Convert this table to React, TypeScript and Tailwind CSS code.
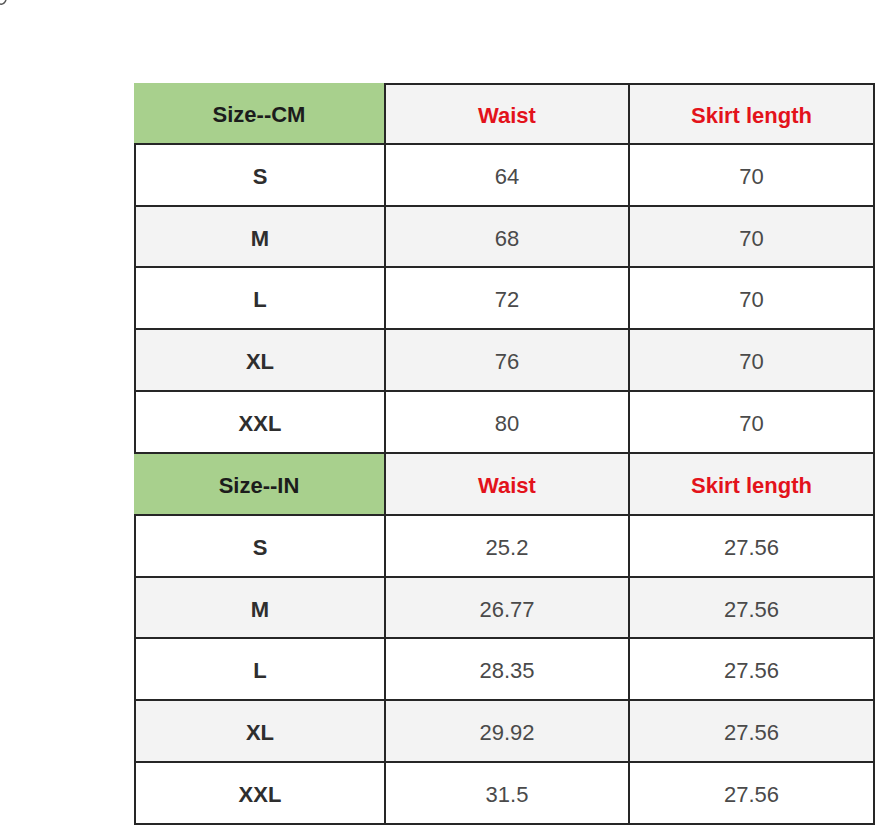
const cm = [
  ["S", "64", "70"],
  ["M", "68", "70"],
  ["L", "72", "70"],
  ["XL", "76", "70"],
  ["XXL", "80", "70"],
];
const inch = [
  ["S", "25.2", "27.56"],
  ["M", "26.77", "27.56"],
  ["L", "28.35", "27.56"],
  ["XL", "29.92", "27.56"],
  ["XXL", "31.5", "27.56"],
];

function Header({ label, first }: { label: string; first: boolean }) {
  return (
    <>
      <div className="flex items-center justify-center border-b-2 border-r-2 border-[#262626] bg-[#a8d08d] pt-[3px] text-[22px] font-bold text-[#1c1c1c]">
        {label}
      </div>
      <div className={`flex items-center justify-center border-b-2 border-r-2 border-[#262626] bg-[#f3f3f3] pt-[3px] text-[22px] font-bold text-[#e3121b] ${first ? "border-t-2" : ""}`}>
        Waist
      </div>
      <div className={`flex items-center justify-center border-b-2 border-r-2 border-[#262626] bg-[#f3f3f3] pt-[3px] text-[22px] font-bold text-[#e3121b] ${first ? "border-t-2" : ""}`}>
        Skirt length
      </div>
    </>
  );
}

function Rows({ rows }: { rows: string[][] }) {
  return (
    <>
      {rows.map((r, i) => {
        const bg = i % 2 === 1 ? "bg-[#f3f3f3]" : "bg-white";
        return (
          <div key={r[0]} className="contents">
            <div className={`flex items-center justify-center border-b-2 border-l-2 border-r-2 border-[#262626] ${bg} pt-[3px] text-[22px] font-bold text-[#2e2e2e]`}>
              {r[0]}
            </div>
            <div className={`flex items-center justify-center border-b-2 border-r-2 border-[#262626] ${bg} pt-[3px] text-[22px] text-[#4a4a4a]`}>
              {r[1]}
            </div>
            <div className={`flex items-center justify-center border-b-2 border-r-2 border-[#262626] ${bg} pt-[3px] text-[22px] text-[#4a4a4a]`}>
              {r[2]}
            </div>
          </div>
        );
      })}
    </>
  );
}

export default function App() {
  return (
    <div className="relative min-h-[827px] w-[881px] bg-white pl-[134px] pt-[83px] font-['Liberation_Sans',Arial,sans-serif]">
      <svg className="absolute left-0 top-0" width="10" height="8" viewBox="0 0 10 8">
        <path d="M0 4 Q4 5 6 0" stroke="#555" strokeWidth="1.5" fill="none" />
      </svg>
      <div className="grid h-[742px] w-[741px] grid-cols-[252px_244px_245px] grid-rows-[repeat(12,1fr)]">
        <Header label="Size--CM" first />
        <Rows rows={cm} />
        <Header label="Size--IN" first={false} />
        <Rows rows={inch} />
      </div>
    </div>
  );
}
